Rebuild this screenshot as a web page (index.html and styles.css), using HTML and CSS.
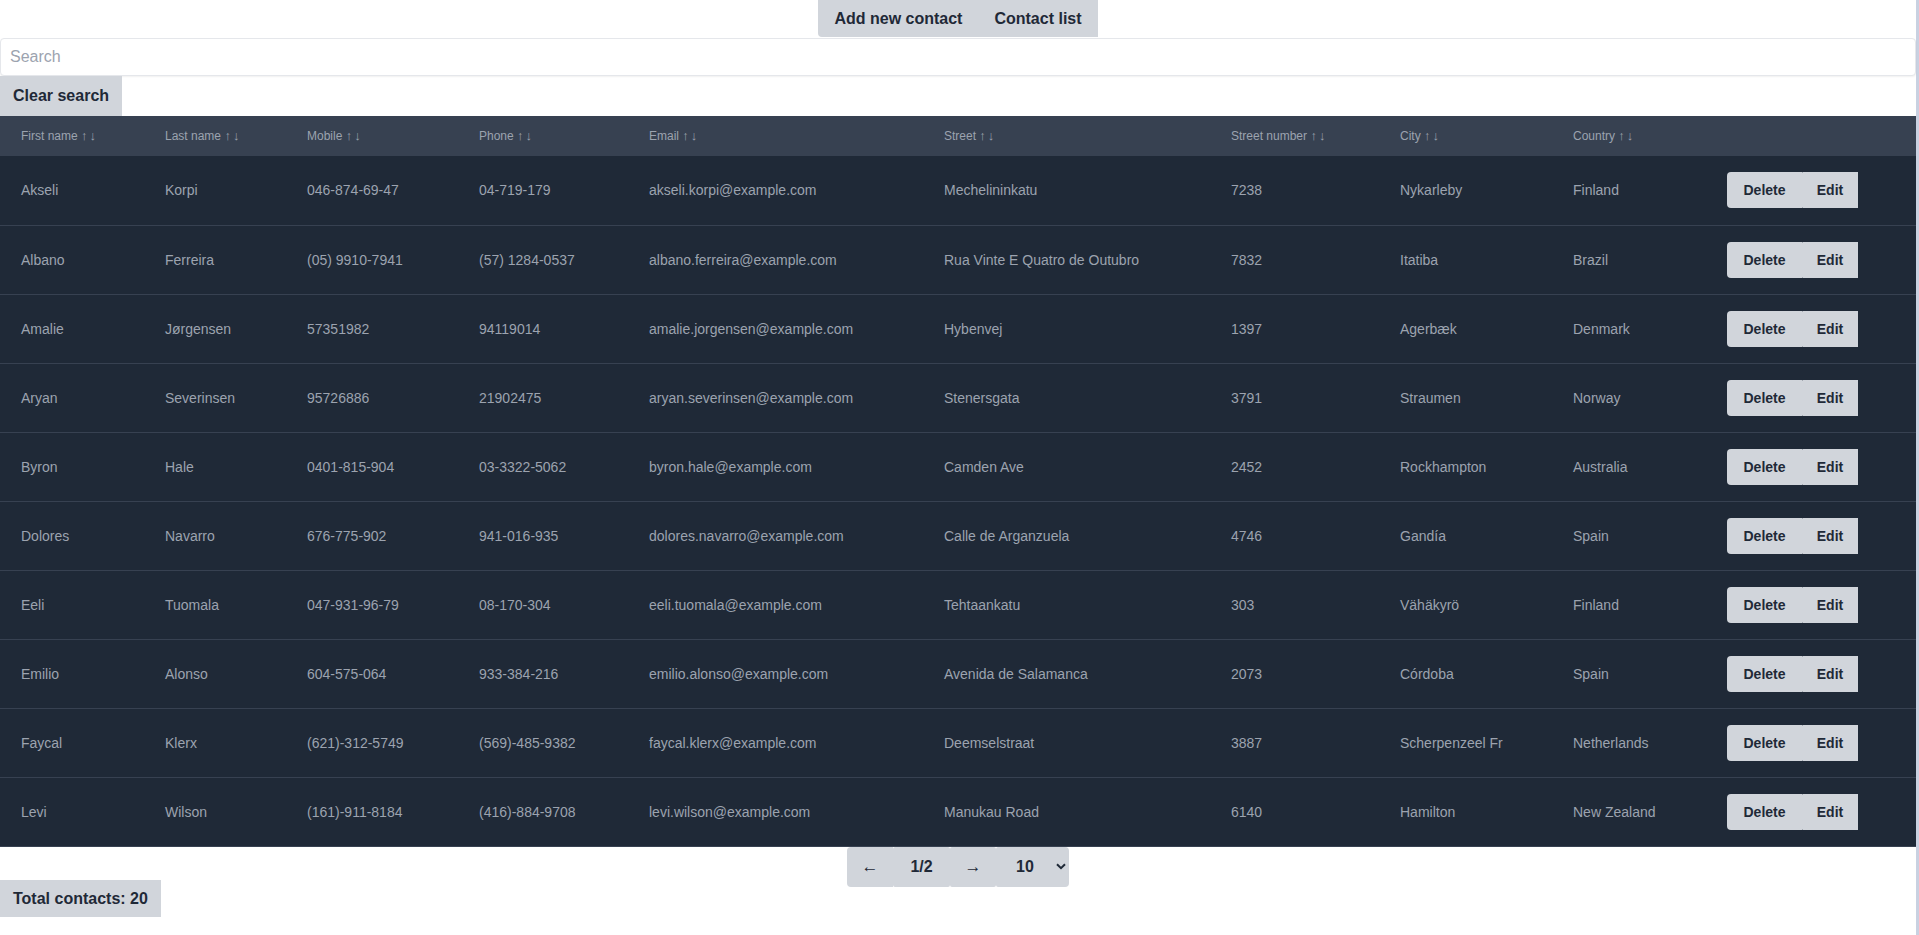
FILE: index.html
```html
<!DOCTYPE html>
<html lang="en">
<head>
<meta charset="utf-8">
<title>Contacts</title>
<link rel="stylesheet" href="styles.css">
</head>
<body>
<div class="app">
  <nav class="nav">
    <button class="nav-btn first">Add new contact</button>
    <button class="nav-btn">Contact list</button>
  </nav>
  <input class="search" type="text" placeholder="Search">
  <div class="clear-row"><button class="clear-btn">Clear search</button></div>
  <table class="contacts">
    <colgroup>
      <col class="c-first"><col class="c-last"><col class="c-mobile"><col class="c-phone"><col class="c-email"><col class="c-street"><col class="c-num"><col class="c-city"><col class="c-country"><col class="c-actions">
    </colgroup>
    <thead>
      <tr>
        <th>First name <span class="sort">↑↓</span></th><th>Last name <span class="sort">↑↓</span></th><th>Mobile <span class="sort">↑↓</span></th><th>Phone <span class="sort">↑↓</span></th><th>Email <span class="sort">↑↓</span></th><th>Street <span class="sort">↑↓</span></th><th>Street number <span class="sort">↑↓</span></th><th>City <span class="sort">↑↓</span></th><th>Country <span class="sort">↑↓</span></th><th></th>
      </tr>
    </thead>
    <tbody>
      <tr><td>Akseli</td><td>Korpi</td><td>046-874-69-47</td><td>04-719-179</td><td>akseli.korpi@example.com</td><td>Mechelininkatu</td><td>7238</td><td>Nykarleby</td><td>Finland</td><td><div class="actions"><button class="act del">Delete</button><button class="act edit">Edit</button></div></td></tr>
      <tr><td>Albano</td><td>Ferreira</td><td>(05) 9910-7941</td><td>(57) 1284-0537</td><td>albano.ferreira@example.com</td><td>Rua Vinte E Quatro de Outubro</td><td>7832</td><td>Itatiba</td><td>Brazil</td><td><div class="actions"><button class="act del">Delete</button><button class="act edit">Edit</button></div></td></tr>
      <tr><td>Amalie</td><td>Jørgensen</td><td>57351982</td><td>94119014</td><td>amalie.jorgensen@example.com</td><td>Hybenvej</td><td>1397</td><td>Agerbæk</td><td>Denmark</td><td><div class="actions"><button class="act del">Delete</button><button class="act edit">Edit</button></div></td></tr>
      <tr><td>Aryan</td><td>Severinsen</td><td>95726886</td><td>21902475</td><td>aryan.severinsen@example.com</td><td>Stenersgata</td><td>3791</td><td>Straumen</td><td>Norway</td><td><div class="actions"><button class="act del">Delete</button><button class="act edit">Edit</button></div></td></tr>
      <tr><td>Byron</td><td>Hale</td><td>0401-815-904</td><td>03-3322-5062</td><td>byron.hale@example.com</td><td>Camden Ave</td><td>2452</td><td>Rockhampton</td><td>Australia</td><td><div class="actions"><button class="act del">Delete</button><button class="act edit">Edit</button></div></td></tr>
      <tr><td>Dolores</td><td>Navarro</td><td>676-775-902</td><td>941-016-935</td><td>dolores.navarro@example.com</td><td>Calle de Arganzuela</td><td>4746</td><td>Gandía</td><td>Spain</td><td><div class="actions"><button class="act del">Delete</button><button class="act edit">Edit</button></div></td></tr>
      <tr><td>Eeli</td><td>Tuomala</td><td>047-931-96-79</td><td>08-170-304</td><td>eeli.tuomala@example.com</td><td>Tehtaankatu</td><td>303</td><td>Vähäkyrö</td><td>Finland</td><td><div class="actions"><button class="act del">Delete</button><button class="act edit">Edit</button></div></td></tr>
      <tr><td>Emilio</td><td>Alonso</td><td>604-575-064</td><td>933-384-216</td><td>emilio.alonso@example.com</td><td>Avenida de Salamanca</td><td>2073</td><td>Córdoba</td><td>Spain</td><td><div class="actions"><button class="act del">Delete</button><button class="act edit">Edit</button></div></td></tr>
      <tr><td>Faycal</td><td>Klerx</td><td>(621)-312-5749</td><td>(569)-485-9382</td><td>faycal.klerx@example.com</td><td>Deemselstraat</td><td>3887</td><td>Scherpenzeel Fr</td><td>Netherlands</td><td><div class="actions"><button class="act del">Delete</button><button class="act edit">Edit</button></div></td></tr>
      <tr><td>Levi</td><td>Wilson</td><td>(161)-911-8184</td><td>(416)-884-9708</td><td>levi.wilson@example.com</td><td>Manukau Road</td><td>6140</td><td>Hamilton</td><td>New Zealand</td><td><div class="actions"><button class="act del">Delete</button><button class="act edit">Edit</button></div></td></tr>
    </tbody>
  </table>
  <div class="pager-row">
    <div class="pager">
      <button class="pg prev">←</button>
      <span class="pg page">1/2</span>
      <button class="pg next">→</button>
      <div class="pg size">10
        <svg class="chev" width="10" height="7" viewBox="0 0 10 7"><path d="M1 1.2 L5 5.2 L9 1.2" fill="none" stroke="#1f2937" stroke-width="2"/></svg>
      </div>
    </div>
  </div>
  <div class="total">Total contacts: 20</div>
</div>
</body>
</html>
```
FILE: styles.css
```css
* { box-sizing: border-box; }
html, body { margin: 0; padding: 0; background: #ffffff; }
body {
  font-family: "Liberation Sans", Arial, sans-serif;
  color: #1f2937;
}
.app {
  width: 100%;
  border-right: 3px solid #c9d1e1;
  min-height: 935px;
}
button { font-family: inherit; border: 0; margin: 0; cursor: pointer; }

.nav {
  display: flex;
  justify-content: center;
  height: 37px;
}
.nav-btn {
  height: 37px;
  padding: 0 16px;
  background: #d1d5db;
  color: #1f2937;
  font-size: 16px;
  font-weight: 700;
}
.nav-btn.first { border-bottom-left-radius: 4px; }

.search {
  display: block;
  width: 100%;
  height: 38px;
  margin-top: 1px;
  border: 1px solid #e5e7eb;
  border-radius: 4px;
  box-shadow: 0 1px 2px rgba(0,0,0,0.06);
  padding: 0 9px;
  font-family: inherit;
  font-size: 16px;
  color: #1f2937;
  outline: none;
}
.search::placeholder { color: #9ca3af; }

.clear-row { display: flex; }
.clear-btn {
  height: 40px;
  padding: 0 13px;
  background: #d1d5db;
  color: #1f2937;
  font-size: 16px;
  font-weight: 700;
}

.contacts {
  width: 100%;
  table-layout: fixed;
  border-collapse: collapse;
  font-size: 14px;
  color: #9ca3af;
  text-align: left;
}
.c-first { width: 144px; }
.c-last { width: 142px; }
.c-mobile { width: 172px; }
.c-phone { width: 170px; }
.c-email { width: 295px; }
.c-street { width: 287px; }
.c-num { width: 169px; }
.c-city { width: 173px; }
.c-country { width: 154px; }
.c-actions { width: 210px; }

.contacts thead tr { background: #374151; }
.contacts th {
  height: 40px;
  padding: 0 21px;
  font-size: 12px;
  font-weight: 400;
  line-height: 16px;
  color: #9ca3af;
  white-space: nowrap;
}
.sort { font-size: 13px; letter-spacing: 2px; }
.contacts tbody tr {
  background: #1f2937;
  border-bottom: 1px solid #374151;
}
.contacts td {
  height: 69px;
  padding: 0 21px;
  white-space: nowrap;
  overflow: hidden;
}
.actions { display: flex; }
.act {
  height: 36px;
  background: #d1d5db;
  color: #1f2937;
  font-size: 14px;
  font-weight: 700;
}
.act.del { width: 75px; border-radius: 4px 0 0 4px; }
.act.edit { width: 56px; border-radius: 1px 0 0 1px; }

.pager-row {
  display: flex;
  justify-content: center;
  height: 33px;
}
.pager {
  display: flex;
  height: 40px;
  position: relative;
  z-index: 1;
}
.pg {
  display: flex;
  align-items: center;
  justify-content: center;
  height: 40px;
  background: #d1d5db;
  color: #1f2937;
  font-size: 16px;
  font-weight: 700;
}
.pg.prev { width: 46px; border-radius: 4px 0 0 4px; font-weight: 400; font-size: 17px; }
.pg.page { width: 57px; border-radius: 2px; }
.pg.next { width: 46px; border-radius: 2px; font-weight: 400; font-size: 17px; }
.pg.size {
  width: 73px;
  border-radius: 2px 4px 4px 2px;
  justify-content: flex-start;
  padding-left: 20px;
  gap: 22px;
}

.total {
  display: inline-block;
  height: 37px;
  line-height: 37px;
  padding: 0 13px;
  background: #d1d5db;
  color: #1f2937;
  font-size: 16px;
  font-weight: 700;
}
```
